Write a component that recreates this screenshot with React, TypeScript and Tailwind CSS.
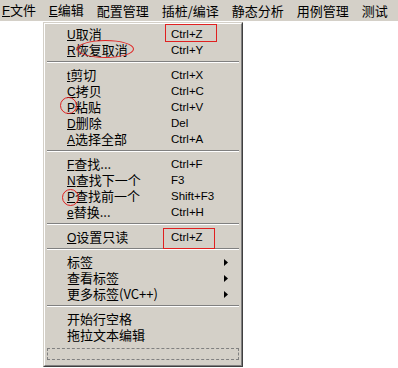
import React from "react";

type Item =
  | { kind: "item"; key?: string; label: string; shortcut?: string; sub?: boolean }
  | { kind: "sep" };

const items: Item[] = [
  { kind: "item", key: "U", label: "取消", shortcut: "Ctrl+Z" },
  { kind: "item", key: "R", label: "恢复取消", shortcut: "Ctrl+Y" },
  { kind: "sep" },
  { kind: "item", key: "t", label: "剪切", shortcut: "Ctrl+X" },
  { kind: "item", key: "C", label: "拷贝", shortcut: "Ctrl+C" },
  { kind: "item", key: "P", label: "粘贴", shortcut: "Ctrl+V" },
  { kind: "item", key: "D", label: "删除", shortcut: "Del" },
  { kind: "item", key: "A", label: "选择全部", shortcut: "Ctrl+A" },
  { kind: "sep" },
  { kind: "item", key: "F", label: "查找...", shortcut: "Ctrl+F" },
  { kind: "item", key: "N", label: "查找下一个", shortcut: "F3" },
  { kind: "item", key: "P", label: "查找前一个", shortcut: "Shift+F3" },
  { kind: "item", key: "e", label: "替换...", shortcut: "Ctrl+H" },
  { kind: "sep" },
  { kind: "item", key: "O", label: "设置只读", shortcut: "Ctrl+Z" },
  { kind: "sep" },
  { kind: "item", label: "标签", sub: true },
  { kind: "item", label: "查看标签", sub: true },
  { kind: "item", label: "更多标签(VC++)", sub: true },
  { kind: "sep" },
  { kind: "item", label: "开始行空格" },
  { kind: "item", label: "拖拉文本编辑" },
];

const menus = [
  { key: "F", label: "文件" },
  { key: "E", label: "编辑" },
  { label: "配置管理" },
  { label: "插桩/编译" },
  { label: "静态分析" },
  { label: "用例管理" },
  { label: "测试" },
];

const font = { fontFamily: '"Noto Sans CJK SC", "Liberation Sans", sans-serif' };

export default function App() {
  return (
    <div className="relative h-[368px] w-[398px] overflow-hidden bg-white text-[13px] leading-[16px] text-black" style={font}>
      {/* menu bar */}
      <div className="flex h-[21px] items-center gap-[13px] bg-[#d4d0c8] pl-[2px]">
        {menus.map((m, i) => (
          <span key={i} className="whitespace-nowrap text-[13px]">
            {m.key && <span className="font-['Liberation_Sans'] underline">{m.key}</span>}
            {m.label}
          </span>
        ))}
      </div>

      {/* dropdown */}
      <div className="ml-[43px] mt-[1px] w-[200px] border border-b-[#404040] border-l-[#d4d0c8] border-r-[#404040] border-t-[#d4d0c8] bg-[#d4d0c8]">
        <div className="border border-b-[#808080] border-l-white border-r-[#808080] border-t-white px-[1px] pb-[5px] pt-[2px]">
          {items.map((it, i) =>
            it.kind === "sep" ? (
              <div key={i} className="mx-[1px] mb-[4px] mt-[3px] border-b border-t border-b-white border-t-[#808080]" />
            ) : (
              <div key={i} className="flex h-[16px] items-center">
                <span className="w-[21px]" />
                <span className="w-[104px] whitespace-nowrap">
                  {it.key && <span className="font-['Liberation_Sans'] text-[12px] underline">{it.key}</span>}
                  {it.label}
                </span>
                <span className="w-[53px] whitespace-nowrap font-['Liberation_Sans'] text-[11.5px]">{it.shortcut}</span>
                {it.sub && (
                  <svg width="4" height="7" viewBox="0 0 4 7">
                    <path d="M0 0 L4 3.5 L0 7 Z" fill="black" />
                  </svg>
                )}
              </div>
            )
          )}
          <div className="mx-[1px] mt-[5px] h-[12px] border border-dashed border-[#808080]" />
        </div>
      </div>

      {/* red annotations */}
      <div className="absolute left-[165px] top-[24px] h-[18px] w-[52px] border border-[#e02020]" />
      <div className="absolute left-[77px] top-[40px] h-[18px] w-[57px] rounded-[50%] border border-[#e02020]" />
      <div className="absolute left-[60px] top-[97px] h-[17px] w-[17px] rounded-full border border-[#e02020]" />
      <div className="absolute left-[62px] top-[189px] h-[17px] w-[17px] rounded-full border border-[#e02020]" />
      <div className="absolute left-[163px] top-[228px] h-[21px] w-[52px] border border-[#e02020]" />
    </div>
  );
}
